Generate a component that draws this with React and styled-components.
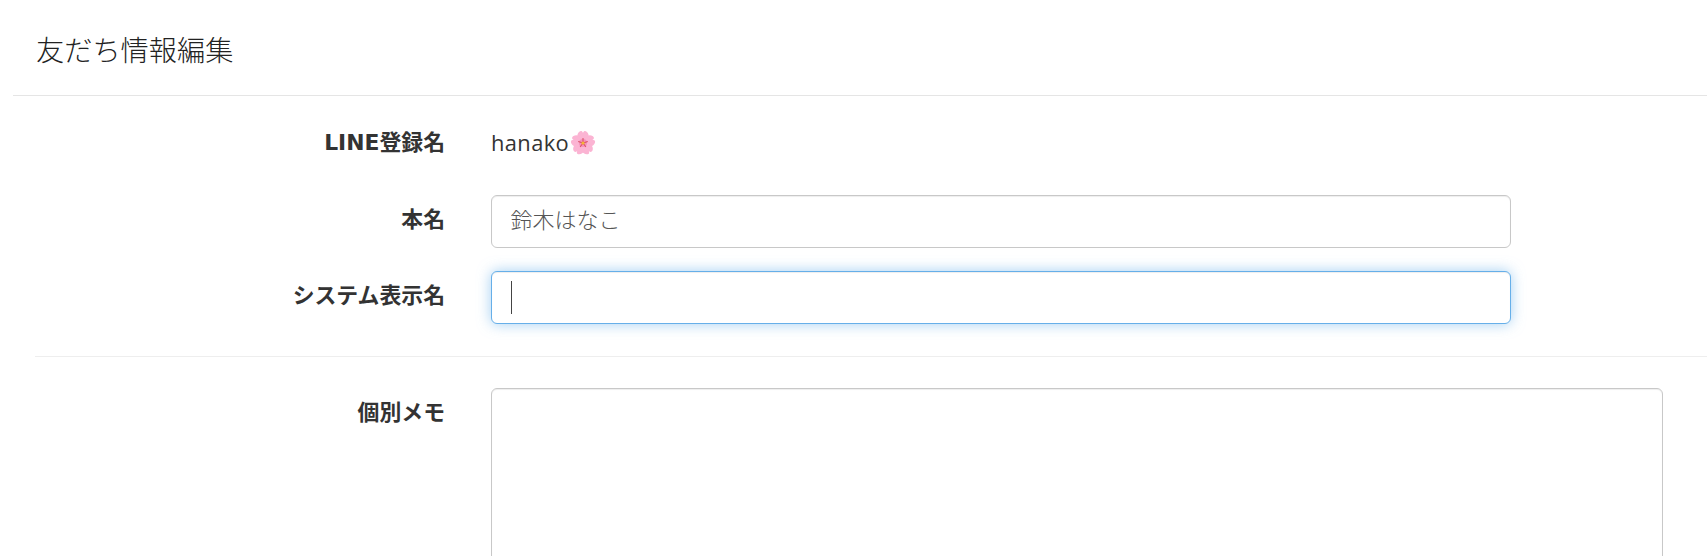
import React from "react";
import styled, { createGlobalStyle } from "styled-components";

const Global = createGlobalStyle`
  html, body { margin: 0; padding: 0; height: 100%; background: #fff; overflow: hidden; }
  body { font-family: "Open Sans", "Noto Sans CJK JP", sans-serif; color: #333; }
`;
const Page = styled.div`
  width: 1707px;
  height: 556px;
  overflow: hidden;
  padding-left: 13px;
  box-sizing: border-box;
`;
const Header = styled.header`
  height: 96px;
  box-sizing: border-box;
  border-bottom: 1.5px solid #e5e5e5;
  padding: 29px 0 0 23px;
`;
const Title = styled.h1`
  margin: 0;
  font: 300 28.2px/40px "Noto Sans CJK JP", sans-serif;
  color: #222;
`;
const Form = styled.form`
  padding-left: 22px;
`;
const Row = styled.div`
  display: grid;
  grid-template-columns: 410px 1fr;
  column-gap: 46px;
  align-items: start;
  margin-bottom: ${(p) => p.$gap || 23}px;
`;
const Label = styled.label`
  text-align: right;
  font: 700 21.875px/31px "DejaVu Sans", "Noto Sans CJK JP", sans-serif;
  color: #333;
  padding-top: ${(p) => p.$top ?? 9}px;
`;
const StaticValue = styled.div`
  display: flex;
  align-items: center;
  font: 400 21.875px/31px "Open Sans", "Noto Sans CJK JP", sans-serif;
  letter-spacing: 0.4px;
  color: #333;
  padding-top: 31px;
`;
const Field = styled.div`
  position: relative;
  width: ${(p) => p.$width}px;
`;
const Input = styled.input`
  display: block;
  width: 100%;
  height: 53px;
  box-sizing: border-box;
  padding: 0 18.5px 8px;
  font: 300 22px/31px "Noto Sans CJK JP", sans-serif;
  color: #555;
  background: #fff;
  border: 1.5px solid ${(p) => (p.$focus ? "#66afe9" : "#c8c8c8")};
  border-radius: 6px;
  outline: none;
  box-shadow: ${(p) =>
    p.$focus
      ? "inset 0 1px 1px rgba(0,0,0,.07), 0 0 14px rgba(102,175,233,.6)"
      : "inset 0 1px 1px rgba(0,0,0,.07)"};
`;
const Caret = styled.span`
  position: absolute;
  left: 20px;
  top: 10px;
  width: 1px;
  height: 33px;
  background: #444;
`;
const Divider = styled.hr`
  margin: 0 0 31px;
  border: 0;
  border-top: 1.5px solid #eee;
`;
const Memo = styled.textarea`
  display: block;
  width: 100%;
  height: 300px;
  box-sizing: border-box;
  padding: 9px 18px;
  border: 1.5px solid #c8c8c8;
  border-radius: 6px;
  outline: none;
  resize: none;
  background: #fff;
  box-shadow: inset 0 1px 1px rgba(0,0,0,.07);
`;

const petals = [0, 72, 144, 216, 288];
const Blossom = () => (
  <svg width="28" height="28" viewBox="0 0 28 28" aria-hidden="true">
    {petals.map((a) => (
      <path
        key={a}
        d="M14 14C9.5 12.5 7.6 8.5 8.6 5.2C9.2 3.2 10.9 1.8 12.4 2C13.2 2.1 13.7 3 14 4.2C14.3 3 14.8 2.1 15.6 2C17.1 1.8 18.8 3.2 19.4 5.2C20.4 8.5 18.5 12.5 14 14Z"
        fill="#fbb4d3"
        transform={`rotate(${a} 14 14)`}
      />
    ))}
    <circle cx="14" cy="14" r="4" fill="#f690bb" />
    {petals.map((a) => (
      <line key={a} x1="14" y1="14" x2="14" y2="9" stroke="#d94f62" strokeWidth="1" transform={`rotate(${a} 14 14)`} />
    ))}
    <circle cx="14" cy="14" r="1.6" fill="#f2b632" />
  </svg>
);

export default function App() {
  return (
    <Page>
      <Global />
      <Header>
        <Title>友だち情報編集</Title>
      </Header>
      <Form>
        <Row $gap={37}>
          <Label $top={31}>LINE登録名</Label>
          <StaticValue>
            hanako
            <Blossom />
          </StaticValue>
        </Row>
        <Row>
          <Label>本名</Label>
          <Field $width={1020}>
            <Input defaultValue="鈴木はなこ" />
          </Field>
        </Row>
        <Row $gap={32}>
          <Label>システム表示名</Label>
          <Field $width={1020}>
            <Input $focus />
            <Caret />
          </Field>
        </Row>
        <Divider />
        <Row>
          <Label>個別メモ</Label>
          <Field $width={1172}>
            <Memo />
          </Field>
        </Row>
      </Form>
    </Page>
  );
}
